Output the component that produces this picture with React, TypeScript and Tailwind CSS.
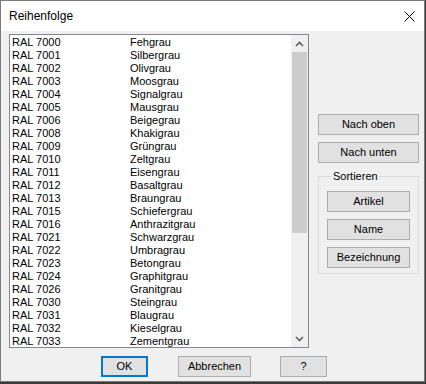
import React from 'react';

const colors: [string, string][] = [
  ['RAL 7000', 'Fehgrau'],
  ['RAL 7001', 'Silbergrau'],
  ['RAL 7002', 'Olivgrau'],
  ['RAL 7003', 'Moosgrau'],
  ['RAL 7004', 'Signalgrau'],
  ['RAL 7005', 'Mausgrau'],
  ['RAL 7006', 'Beigegrau'],
  ['RAL 7008', 'Khakigrau'],
  ['RAL 7009', 'Grüngrau'],
  ['RAL 7010', 'Zeltgrau'],
  ['RAL 7011', 'Eisengrau'],
  ['RAL 7012', 'Basaltgrau'],
  ['RAL 7013', 'Braungrau'],
  ['RAL 7015', 'Schiefergrau'],
  ['RAL 7016', 'Anthrazitgrau'],
  ['RAL 7021', 'Schwarzgrau'],
  ['RAL 7022', 'Umbragrau'],
  ['RAL 7023', 'Betongrau'],
  ['RAL 7024', 'Graphitgrau'],
  ['RAL 7026', 'Granitgrau'],
  ['RAL 7030', 'Steingrau'],
  ['RAL 7031', 'Blaugrau'],
  ['RAL 7032', 'Kieselgrau'],
  ['RAL 7033', 'Zementgrau'],
];

const Button: React.FC<{ label: string; className?: string }> = ({ label, className = '' }) => (
  <button
    className={`h-[21px] bg-[#e1e1e1] border border-[#adadad] text-[11px] leading-[13px] text-black flex items-center justify-center ${className}`}
  >
    {label}
  </button>
);

const Chevron: React.FC<{ up?: boolean }> = ({ up }) => (
  <svg width="9" height="6" viewBox="0 0 9 6">
    <path
      d={up ? 'M1 5 L4.5 1.5 L8 5' : 'M1 1 L4.5 4.5 L8 1'}
      fill="none"
      stroke="#606060"
      strokeWidth="1.6"
    />
  </svg>
);

export default function App() {
  return (
    <div className="w-[426px] h-[384px] bg-[#3b3b3b] font-['Liberation_Sans',Arial,sans-serif] text-black">
      <div className="w-[425px] h-[382px] border border-[#7a7a7a] bg-[#f0f0f0] flex flex-col">
        {/* Title bar */}
        <div className="h-[30px] bg-white flex items-center justify-between pl-[8px] pr-[9px]">
          <span className="text-[12px]">Reihenfolge</span>
          <svg width="11" height="11" viewBox="0 0 11 11">
            <path d="M0.5 0.5 L10.5 10.5 M10.5 0.5 L0.5 10.5" stroke="#000" strokeWidth="1" />
          </svg>
        </div>

        {/* Content */}
        <div className="flex pt-[3px] pl-[8px]">
          {/* List */}
          <div className="w-[300px] h-[314px] border border-[#828790] bg-white flex">
            <div className="flex-1 overflow-hidden pl-[2px] text-[11px]">
              {colors.map(([code, name]) => (
                <div key={code} className="h-[13px] leading-[13px] flex pt-px">
                  <span className="w-[118px]">{code}</span>
                  <span>{name}</span>
                </div>
              ))}
            </div>
            <div className="w-[17px] bg-[#f0f0f0] flex flex-col">
              <div className="h-[17px] flex items-center justify-center">
                <Chevron up />
              </div>
              <div className="h-[181px] mx-px bg-[#cdcdcd]" />
              <div className="flex-1" />
              <div className="h-[17px] flex items-center justify-center">
                <Chevron />
              </div>
            </div>
          </div>

          {/* Right panel */}
          <div className="ml-[9px] w-[101px] pt-[80px] flex flex-col">
            <Button label="Nach oben" className="w-full" />
            <Button label="Nach unten" className="w-full mt-[7px]" />
            <fieldset className="mt-[7px] border border-[#dcdcdc] px-[8px] pb-[5px] flex flex-col">
              <legend className="ml-[5px] px-px text-[11px] leading-[13px]">Sortieren</legend>
              <Button label="Artikel" className="w-full mt-[8px]" />
              <Button label="Name" className="w-full mt-[7px]" />
              <Button label="Bezeichnung" className="w-full mt-[7px]" />
            </fieldset>
          </div>
        </div>

        {/* Bottom buttons */}
        <div className="flex pl-[100px] mt-[8px]">
          <button className="w-[47px] h-[21px] bg-[#e1e1e1] border-2 border-[#0078d7] text-[11px] flex items-center justify-center">
            OK
          </button>
          <Button label="Abbrechen" className="w-[73px] ml-[30px]" />
          <Button label="?" className="w-[47px] ml-[29px]" />
        </div>
      </div>
    </div>
  );
}
